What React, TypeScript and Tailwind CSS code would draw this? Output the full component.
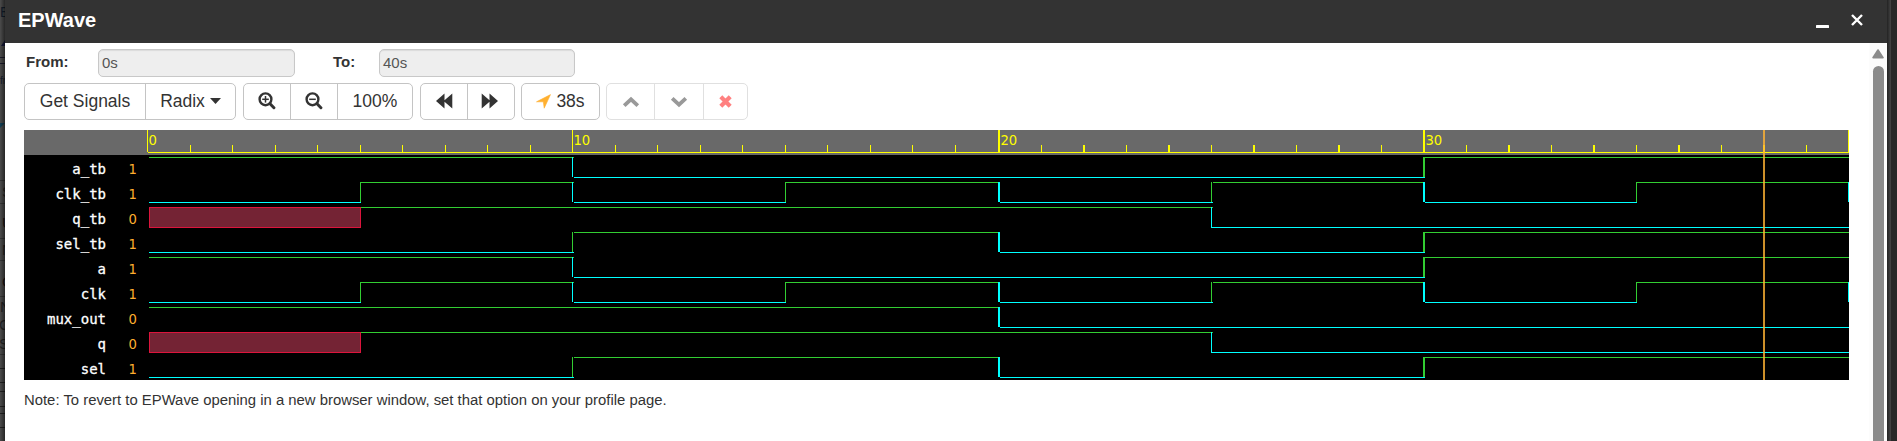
import type { ReactNode } from 'react';

type Level = 0 | 1 | 'x';
type Change = [time: number, level: Level];
interface Signal {
  name: string;
  value: string;
  wave: Change[];
}

const CLK: Change[] = [[0, 0], [5, 1], [10, 0], [15, 1], [20, 0], [25, 1], [30, 0], [35, 1], [40, 0]];
const A: Change[] = [[0, 1], [10, 0], [30, 1]];
const Q: Change[] = [[0, 'x'], [5, 1], [25, 0]];
const SEL: Change[] = [[0, 0], [10, 1], [20, 0], [30, 1]];

const SIGNALS: Signal[] = [
  { name: 'a_tb', value: '1', wave: A },
  { name: 'clk_tb', value: '1', wave: CLK },
  { name: 'q_tb', value: '0', wave: Q },
  { name: 'sel_tb', value: '1', wave: SEL },
  { name: 'a', value: '1', wave: A },
  { name: 'clk', value: '1', wave: CLK },
  { name: 'mux_out', value: '0', wave: [[0, 1], [20, 0]] },
  { name: 'q', value: '0', wave: Q },
  { name: 'sel', value: '1', wave: SEL },
];

const WIDTH = 1702;
const GREEN = '#32cd32';
const CYAN = '#00ffff';

// Pixel column of a time step, relative to the left edge of the wave area.
const col = (t: number) => {
  const x = 0.5 + t * 42.525;
  return t % 2 ? Math.round(x) : Math.floor(x);
};
const thick = (t: number) => (t % 2 === 0 && t >= 20 ? 2 : 1);
const joint = (t: number) => {
  if (t === 0) return 2;
  if (t === 10 || t === 25) return col(t) + 2;
  return col(t) + thick(t);
};

function Ruler() {
  return (
    <svg width={WIDTH} height={25} shapeRendering="crispEdges" className="block">
      <rect x={1} y={22} width={WIDTH} height={1} fill="#ff0" />
      {Array.from({ length: 41 }, (_, t) => (
        <rect key={t} x={col(t)} y={t % 10 ? 15 : 0} width={thick(t)} height={t % 10 ? 7 : 22} fill="#ff0" />
      ))}
      {[0, 10, 20, 30].map((t) => (
        <text
          key={t}
          x={col(t) + thick(t) + 0.4}
          y={15}
          fill="#ff0"
          className="font-['DejaVu_Sans'] text-[13.2px] [-webkit-text-stroke:0.2px_#ff0]"
        >
          {t}
        </text>
      ))}
    </svg>
  );
}

function Wave({ wave }: { wave: Change[] }) {
  return (
    <svg width={WIDTH} height={25} shapeRendering="crispEdges" className="block">
      {wave.map(([t, level], i) => {
        const end = i + 1 < wave.length ? joint(wave[i + 1][0]) : WIDTH;
        const x = t === 25 && level === 0 ? col(t) : joint(t);
        if (t === 40) return null;
        if (level === 'x') {
          return (
            <rect key={t} x={x + 0.5} y={2.5} width={end - x - 1} height={20} fill="#742334" stroke="#dc143c" />
          );
        }
        return <rect key={t} x={x} y={level ? 2 : 22} width={end - x} height={1} fill={level ? GREEN : CYAN} />;
      })}
      {wave.map(([t, level], i) =>
        i > 0 && wave[i - 1][1] !== 'x' ? (
          <rect key={t} x={col(t)} y={2} width={thick(t)} height={20} fill={level ? GREEN : CYAN} />
        ) : null,
      )}
    </svg>
  );
}

function Group({ muted, className, children }: { muted?: boolean; className: string; children: ReactNode }) {
  return (
    <div
      className={`flex h-[37px] divide-x rounded-[5px] border ${
        muted ? 'divide-[#e0e0e0] border-[#e0e0e0]' : 'divide-[#c4c4c4] border-[#c4c4c4]'
      } ${className}`}
    >
      {children}
    </div>
  );
}

function Btn({ className, label, children }: { className: string; label?: string; children: ReactNode }) {
  return (
    <button
      aria-label={label}
      className={`flex items-center justify-center pb-px text-[17.5px] leading-5 whitespace-nowrap text-[#333] ${className}`}
    >
      {children}
    </button>
  );
}

function Magnifier({ plus }: { plus?: boolean }) {
  return (
    <svg width="18" height="18" viewBox="0 0 18 18" fill="none" stroke="#333">
      <circle cx="7.5" cy="7.3" r="5.9" strokeWidth="2.4" />
      <path d="M12 11.8l3.9 3.9" strokeWidth="3" strokeLinecap="round" />
      <path d="M4.2 7.3h6.6" strokeWidth="1.5" />
      {plus && <path d="M7.5 4v6.6" strokeWidth="1.5" />}
    </svg>
  );
}

function Field({ label, value, labelClass, inputClass }: { label: string; value: string; labelClass: string; inputClass: string }) {
  return (
    <div className="flex h-7">
      <span className={`pt-[3px] text-[15px] leading-5 font-bold text-[#333] ${labelClass}`}>{label}</span>
      <div
        className={`h-7 rounded-[5px] border border-[#c8c8c8] bg-[#eee] pt-[3px] pl-[3px] text-[15px] leading-5 text-[#555] shadow-[inset_0_1px_1px_rgba(0,0,0,0.08)] ${inputClass}`}
      >
        {value}
      </div>
    </div>
  );
}

const BACKDROP_ROWS = [180, 203, 238, 260, 296, 354, 368, 382, 391, 406, 413, 427];
const BACKDROP_TEXT = [
  { y: 17, x: 0, s: 'E', size: 14, c: '#14202e' },
  { y: 84, x: 0, s: 'fr', size: 10, c: '#17202e' },
  { y: 197, x: 2, s: 'S', size: 15, c: '#252525' },
  { y: 228, x: 2, s: 'U', size: 15, c: '#1c1414' },
  { y: 255, x: 2, s: 'N', size: 15, c: '#252525' },
  { y: 287, x: 2, s: 'C', size: 15, c: '#1c1414' },
  { y: 312, x: 0, s: 'N', size: 15, c: '#252525' },
  { y: 330, x: -1, s: 'C', size: 15, c: '#252525' },
  { y: 349, x: -1, s: 'S', size: 15, c: '#252525' },
];

function Backdrop() {
  return (
    <svg width="5" height="441" className="block shrink-0">
      <defs>
        <linearGradient id="shade">
          <stop offset="0" stopColor="#000" stopOpacity="0" />
          <stop offset="1" stopColor="#000" stopOpacity="0.5" />
        </linearGradient>
      </defs>
      <rect width="5" height="441" fill="#4c4c4c" />
      {BACKDROP_ROWS.map((y) => (
        <rect key={y} y={y} width="5" height="1" fill={y > 360 ? '#222' : '#363636'} />
      ))}
      {BACKDROP_TEXT.map((t) => (
        <text key={t.y} x={t.x} y={t.y} fontSize={t.size} fill={t.c}>
          {t.s}
        </text>
      ))}
      <path d="M1 46L5 40v6z" fill="#14183a" />
      <path d="M0 57.5h5M0 63.5h5" stroke="#1a1a2a" />
      <path d="M0 123h5l-5 5z" fill="#123f55" />
      <rect width="5" height="441" fill="url(#shade)" />
    </svg>
  );
}

export default function App() {
  return (
    <div className="flex h-[441px] w-[1897px] overflow-hidden bg-[#282828] font-['Liberation_Sans',Arial,sans-serif]">
      <Backdrop />
      <div className="flex w-[1882px] shrink-0 flex-col bg-white">
        <header className="flex h-[43px] shrink-0 items-center justify-between bg-[#333] pr-[23px] pl-[13px]">
          <h1 className="pb-[3px] text-[20px] leading-6 font-bold text-white">EPWave</h1>
          <div className="flex items-center gap-5 pb-[3px]">
            <svg width="15" height="16" viewBox="0 0 15 16">
              <rect x="1" y="13" width="13" height="3" rx="0.6" fill="#fff" />
            </svg>
            <svg width="14" height="14" viewBox="0 0 14 14">
              <path d="M2 2l10 10M12 2L2 12" stroke="#fff" strokeWidth="2.4" />
            </svg>
          </div>
        </header>
        <div className="flex h-[398px]">
          <main className="w-[1864px] shrink-0 pt-1.5 pl-[19px]">
            <div className="flex pl-0.5">
              <Field label="From:" value="0s" labelClass="w-[72px]" inputClass="w-[197px]" />
              <Field label="To:" value="40s" labelClass="ml-[38px] w-[46px]" inputClass="w-[196px]" />
            </div>
            <div className="mt-1.5 flex">
              <Group className="w-[212px]">
                <Btn className="w-[121px]">Get Signals</Btn>
                <Btn className="flex-1 gap-[5px]">
                  Radix
                  <svg width="11" height="6" viewBox="0 0 11 6">
                    <path d="M0 0h11L5.5 6z" fill="#333" />
                  </svg>
                </Btn>
              </Group>
              <Group className="ml-[7px] w-[170px]">
                <Btn label="Zoom in" className="w-[47px]"><Magnifier plus /></Btn>
                <Btn label="Zoom out" className="w-[47px]"><Magnifier /></Btn>
                <Btn className="flex-1">100%</Btn>
              </Group>
              <Group className="ml-[7px] w-[95px]">
                <Btn label="Rewind" className="w-[47px]">
                  <svg width="17" height="16" viewBox="0 0 17 16">
                    <path d="M0 8L8.5.5v6.7L16.3.5v15L8.5 8.8v6.7z" fill="#333" />
                  </svg>
                </Btn>
                <Btn label="Forward" className="flex-1">
                  <svg width="17" height="16" viewBox="0 0 17 16" className="mr-[3px]">
                    <path d="M17 8L8.5.5v6.7L.7.5v15l7.8-6.7v6.7z" fill="#333" />
                  </svg>
                </Btn>
              </Group>
              <Group className="ml-1.5 w-[79px]">
                <Btn className="flex-1 gap-[5px]">
                  <svg width="15" height="15" viewBox="0 0 15 15">
                    <path d="M14.5.6L8.2 14.2 7.3 7.8H.5z" fill="#ffb030" stroke="#ffb030" strokeLinejoin="round" strokeWidth=".6" />
                  </svg>
                  38s
                </Btn>
              </Group>
              <Group muted className="ml-1.5 w-[142px]">
                <Btn label="Previous edge" className="w-12">
                  <svg width="18" height="12" viewBox="0 0 18 12" className="mt-px">
                    <path d="M2.2 9.6L9 3.3l6.8 6.3" fill="none" stroke="#999" strokeWidth="3.8" />
                  </svg>
                </Btn>
                <Btn label="Next edge" className="w-[49px]">
                  <svg width="18" height="12" viewBox="0 0 18 12" className="mt-0.5">
                    <path d="M2.2 2.4L9 8.7l6.8-6.3" fill="none" stroke="#999" strokeWidth="3.8" />
                  </svg>
                </Btn>
                <Btn label="Remove" className="flex-1">
                  <svg width="13" height="13" viewBox="0 0 13 13">
                    <path d="M1.8 1.8l9.4 9.4M11.2 1.8l-9.4 9.4" stroke="#ff8080" strokeWidth="4.2" />
                  </svg>
                </Btn>
              </Group>
            </div>
            <div className="relative mt-2.5 h-[250px] w-[1825px] bg-black">
              <div className="h-[25px] bg-[#696969] pl-[123px]">
                <Ruler />
              </div>
              {SIGNALS.map((s) => (
                <div key={s.name} className="flex h-[25px]">
                  <span className="w-[82px] pt-[2px] text-right font-['DejaVu_Sans_Mono'] text-[14px] leading-[25px] text-white [-webkit-text-stroke:0.3px_white]">
                    {s.name}
                  </span>
                  <span className="w-[41px] pt-[2px] pl-[22.5px] font-['DejaVu_Sans'] text-[13.2px] leading-[25px] text-[#ffae2e]">
                    {s.value}
                  </span>
                  <Wave wave={s.wave} />
                </div>
              ))}
              <div className="absolute top-0 left-[1739px] h-[250px] w-0.5 bg-[#ffb333]/80" />
            </div>
            <p className="mt-2.5 text-[14.875px] leading-5 text-[#333]">
              Note: To revert to EPWave opening in a new browser window, set that option on your profile page.
            </p>
          </main>
          <div className="flex w-[18px] shrink-0 flex-col items-center bg-[#fcfcfc] pt-1.5">
            <svg width="12" height="10" viewBox="0 0 12 10" className="shrink-0">
              <path d="M6 1L11 8.6H1z" fill="#8b8b8b" stroke="#8b8b8b" strokeWidth="1.6" strokeLinejoin="round" />
            </svg>
            <div className="mt-[7px] w-[11px] flex-1 rounded-t-full bg-[#8b8b8b]" />
          </div>
        </div>
      </div>
      <div className="w-1 shrink-0 bg-linear-to-r from-[#232323] to-[#454545]" />
    </div>
  );
}
